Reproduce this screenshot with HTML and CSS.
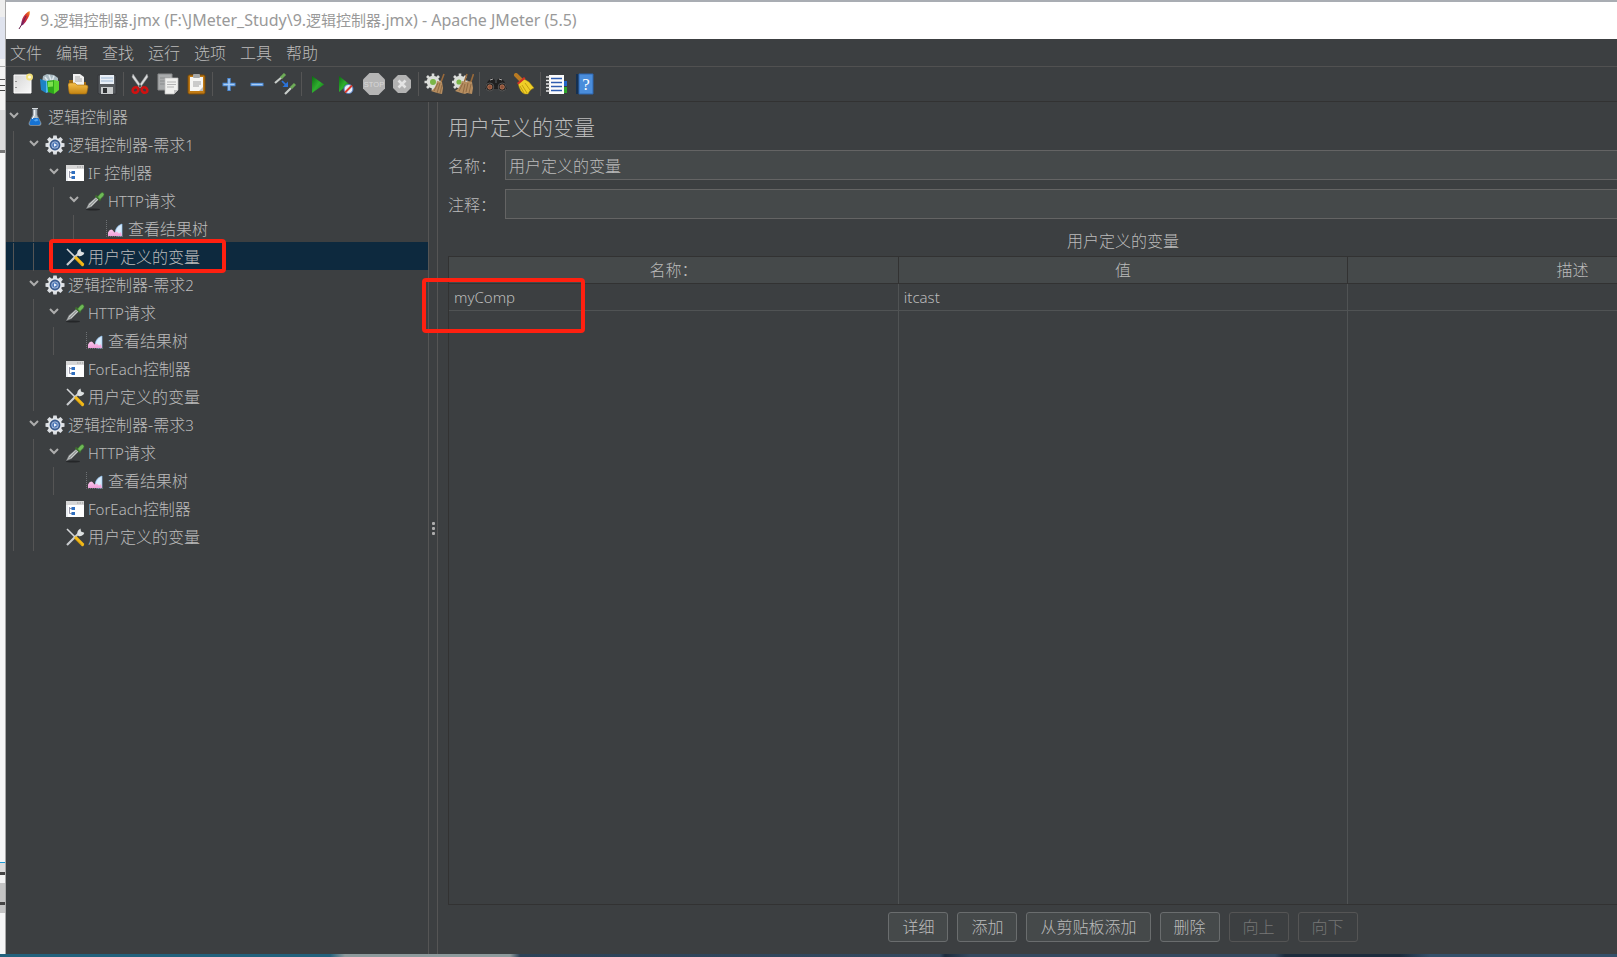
FILE: index.html
```html
<!DOCTYPE html>
<html lang="zh-CN">
<head>
<meta charset="utf-8">
<title>9.逻辑控制器.jmx - Apache JMeter (5.5)</title>
<link rel="stylesheet" href="styles.css">
</head>
<body>
<svg class="defs" aria-hidden="true">
  <defs>
    <linearGradient id="feather" x1="1" y1="0" x2="0" y2="1"><stop offset="0" stop-color="#f29a1f"/><stop offset=".35" stop-color="#d9342b"/><stop offset=".7" stop-color="#b3224f"/><stop offset="1" stop-color="#5b2a86"/></linearGradient>
    <linearGradient id="gold" x1="0" y1="0" x2="0" y2="1"><stop offset="0" stop-color="#f6c04a"/><stop offset="1" stop-color="#c48412"/></linearGradient>
    <linearGradient id="green" x1="0" y1="0" x2="1" y2="1"><stop offset="0" stop-color="#0c6b12"/><stop offset=".5" stop-color="#2fae2f"/><stop offset="1" stop-color="#0a7a10"/></linearGradient>
    <linearGradient id="paper" x1="0" y1="0" x2="1" y2="1"><stop offset="0" stop-color="#d6d6d6"/><stop offset="1" stop-color="#f8f8f8"/></linearGradient>
    <linearGradient id="pink" x1="0" y1="0" x2="0" y2="1"><stop offset="0" stop-color="#f9c6ea"/><stop offset="1" stop-color="#f0a0da"/></linearGradient>
    <symbol id="chev" viewBox="0 0 10 8"><path d="M1 2l4 4 4-4" fill="none" stroke="#adadad" stroke-width="2"/></symbol>
    <symbol id="flask" viewBox="0 0 20 20"><path d="M8 2v6L4 16q-.5 2.500 2 2.500h8q2.500 0 2-2.500L12 8V2z" fill="#b5bfc6" stroke="#7d878e" stroke-width=".8"/><path d="M7 1.500h6" stroke="#d5dade"/><path d="M6.500 11h7l2 5q.3 2-2 2h-7q-2.500 0-2-2z" fill="#1672d2"/><path d="M7 12l2 1 3-1.500 1.500 2-3 1z" fill="#4fa5f5"/><path d="M9.300 3v5.500l-2 3.500" stroke="#fff" fill="none"/></symbol>
    <symbol id="gear" viewBox="0 0 20 20"><g fill="#dcdfe3"><path d="M8.300.5h3.400l.8 5h-5zM8.300 19.500h3.400l.8-5h-5z"/><path d="M8.300.5h3.400l.8 5h-5zM8.300 19.500h3.400l.8-5h-5z" transform="rotate(45 10 10)"/><path d="M8.300.5h3.400l.8 5h-5zM8.300 19.500h3.400l.8-5h-5z" transform="rotate(90 10 10)"/><path d="M8.300.5h3.400l.8 5h-5zM8.300 19.500h3.400l.8-5h-5z" transform="rotate(135 10 10)"/></g><circle cx="10" cy="10" r="7" fill="#e4e7ea"/><circle cx="10" cy="10" r="4.500" fill="#b9cbe6" stroke="#3a5c8f" stroke-width="1.800"/><circle cx="10" cy="10" r="2.800" fill="#4d78b8"/><path d="M9 8.200l3 1.800-3 1.800z" fill="#f2f6fb"/></symbol>
    <symbol id="ctrl" viewBox="0 0 20 20"><path d="M1 2h18v16H1z" fill="#fff"/><path d="M1 2h18v4H1z" fill="#d6d6d6"/><path d="M12 4h1.500M14.500 4H16M17 4h1.200" stroke="#999"/><path d="M1 6h2v12H1z" fill="#e9edf2"/><path d="M4.500 8v6.500H7M4.500 9.500H7" stroke="#99a" fill="none"/><path d="M6.500 8h3.500v3H6.500zM6.500 13h3.500v3H6.500z" fill="#2f6fc0"/></symbol>
    <symbol id="dropper" viewBox="0 0 20 20"><ellipse cx="8" cy="18.500" rx="7" ry="1" fill="#242628"/><path d="M1.500 17.500l2.500-5 7.500-6.500 2.500 2L6.500 15.500z" fill="#c9cdcc" stroke="#7f8384" stroke-width=".6"/><path d="M4 15.500l8-8" stroke="#6d7070" stroke-width="1"/><path d="M10.500 4.500l5 5" stroke="#3d6b2c" stroke-width="2"/><path d="M12.500 6l3-3.500q1.800-1.800 3-.5t0 3L15 8.500z" fill="#6fba57" stroke="#37742b" stroke-width=".6"/></symbol>
    <symbol id="chart" viewBox="0 0 20 20"><path d="M1.500 1v16.500H18" stroke="#6d7174" stroke-width="1" stroke-dasharray="1 1" fill="none"/><path d="M17 5v12h-5q-3-3-1-7 2-4 6-5z" fill="#d8ebfc" stroke="#8fc0ee" stroke-width=".7"/><path d="M3 17v-3.500q2-4 4.500-2.500l2 2.500 2.500-1 2 2 2-1.500 1 4z" fill="url(#pink)"/></symbol>
    <symbol id="tools" viewBox="0 0 20 20"><path d="M2 18L14 6" stroke="#c9cccf" stroke-width="2.200"/><path d="M12.500 7.500q-1-4 3-6l.5 3 2.500 1q1.500-.5 0 2-2.500 2.500-5 1.500z" fill="#dcdfe1"/><path d="M2 2l9 9" stroke="#d4d6d8" stroke-width="1.600"/><path d="M11 11l6.500 6.500" stroke="#f2b919" stroke-width="3.200" stroke-linecap="round"/><path d="M10 12l6.500 6" stroke="#a87a08" stroke-width=".8"/></symbol>

    <symbol id="t-new" viewBox="0 0 22 22"><path d="M2 2h17v18H2z" fill="url(#paper)" stroke="#fff"/><path d="M4 8v1M4 14v1" stroke="#777" stroke-width="1.500"/><circle cx="17.500" cy="4" r="3.500" fill="#f4e27c"/><circle cx="17.500" cy="4" r="1.500" fill="#fffce0"/></symbol>
    <symbol id="t-tpl" viewBox="0 0 22 22"><path d="M3 3l4-2 7 1 4 3v5H2z" fill="#a9bac2"/><path d="M5 4l3 4M9 2l2 5M14 3l-2 5" stroke="#dfe8ec" stroke-width="1.500"/><path d="M0 6l6 2v12l-5-3z" fill="#1d83c5"/><path d="M6 8l3-1v12l-3 1z" fill="#54bbec"/><path d="M7 8l7-1v14l-6-2z" fill="#2da71b"/><path d="M14 7l5 1v9l-5 4z" fill="#5cd62f"/><path d="M8 9l5-.5v5L8 14z" fill="#7ee04f"/></symbol>
    <symbol id="t-open" viewBox="0 0 22 22"><path d="M1 7h6l2 2h9v4H1z" fill="#a06a12"/><path d="M5 1h7l4 3v9H5z" fill="#f1f1f1"/><path d="M7 4h5M7 6h7M7 8h7" stroke="#aaa"/><path d="M0 12q0-2 2-2h5l2 2h9q2 0 2 2l-1 5q0 2-2 2H3q-2 0-2-2z" fill="url(#gold)" stroke="#a36c0d" stroke-width=".6"/></symbol>
    <symbol id="t-save" viewBox="0 0 22 22"><path d="M2 2h17l1 1v18H3l-1-1z" fill="#565a5e" stroke="#34373a"/><path d="M4 2h14v9H4z" fill="#e8eef5"/><path d="M5 5h12M5 8h12" stroke="#9db8d5"/><path d="M5 14h12v7H5z" fill="#c9cccd"/><path d="M7 15h4v5H7z" fill="#2f3234"/></symbol>
    <symbol id="t-cut" viewBox="0 0 22 22"><path d="M4 1l9 13-2 1L3 4zM18 1L9 14l2 1 8-11z" fill="#d9dadb" stroke="#8e9192" stroke-width=".5"/><g fill="none" stroke="#cf1111" stroke-width="2.600"><ellipse cx="6.500" cy="17" rx="3" ry="2.600" transform="rotate(-35 6.500 17)"/><ellipse cx="15.500" cy="17" rx="3" ry="2.600" transform="rotate(35 15.500 17)"/></g></symbol>
    <symbol id="t-copy" viewBox="0 0 22 22"><path d="M1 1h14v16H1z" fill="#a9abac" stroke="#8a8c8d"/><path d="M3 5h10M3 8h10M3 11h8" stroke="#8b8d8e"/><path d="M8 5h13v12l-4 4H8z" fill="#f0f0ee" stroke="#bbb" stroke-width=".7"/><path d="M10 9h9M10 11.500h9M10 14h7" stroke="#b4b4b4"/><path d="M21 17h-4v4z" fill="#c4c4c4"/></symbol>
    <symbol id="t-paste" viewBox="0 0 22 22"><rect x="3" y="2" width="17" height="19" rx="1.500" fill="#c07a14" stroke="#7a4b08"/><path d="M5 4h13v14H5z" fill="#f6f6f4"/><rect x="8" y="1" width="7" height="4" rx="1" fill="#a4a7a8"/><path d="M8 9h8M8 11h8M8 13h6" stroke="#a0a0a0"/><path d="M18 14v4h-4z" fill="#bdbdbd"/></symbol>
    <symbol id="t-plus" viewBox="0 0 22 22"><path d="M11 5v13M4.500 11.500h13" stroke="#4b8ad6" stroke-width="3.400"/><path d="M11 6v11M5.500 11.500h11" stroke="#a9cdf5" stroke-width="1.400"/></symbol>
    <symbol id="t-minus" viewBox="0 0 22 22"><path d="M4.500 11.500h13" stroke="#4b8ad6" stroke-width="3.400"/><path d="M5.500 11.500h11" stroke="#a9cdf5" stroke-width="1.400"/></symbol>
    <symbol id="t-toggle" viewBox="0 0 22 22"><path d="M1 10l7-6M11 21l6-6" stroke="#c8cdca" stroke-width="2.200"/><path d="M7 5l4-4M17 15l4-4" stroke="#6dab57" stroke-width="3"/><path d="M8 8l5 5" stroke="#2a73db" stroke-width="1.700"/><path d="M14 8.500v5.500H8.500z" fill="#2a73db"/></symbol>
    <symbol id="t-run" viewBox="0 0 22 22"><path d="M5 3l12 8.500L5 20z" fill="url(#green)"/></symbol>
    <symbol id="t-run2" viewBox="0 0 22 22"><path d="M4 3l10 8-10 8z" fill="url(#green)"/><circle cx="13.500" cy="16" r="4.500" fill="#e8eefa" stroke="#4a79c4"/><path d="M10 19.500l7-7" stroke="#d8392d" stroke-width="2"/></symbol>
    <symbol id="t-stop" viewBox="0 0 22 22"><path d="M6.500 0h9L22 6.500v9L15.500 22h-9L0 15.500v-9z" fill="#b5b5b5"/><text x="11" y="14" font-family="Liberation Sans" font-size="7.500" fill="#d8d8d8" text-anchor="middle">STOP</text></symbol>
    <symbol id="t-shut" viewBox="0 0 22 22"><path d="M7 2h8l5 5v8l-5 5H7l-5-5V7z" fill="#b3b3b3"/><path d="M7.500 7.500l7 7M14.500 7.500l-7 7" stroke="#e4e4e4" stroke-width="2.600"/></symbol>
    <symbol id="t-clear" viewBox="0 0 22 22"><g stroke="#dadcda" stroke-width="2.600"><path d="M9 .5v17M.5 9h17M3 3l12 12M15 3L3 15"/></g><circle cx="9" cy="9" r="6.300" fill="#dcdfda"/><circle cx="9" cy="9" r="3" fill="#7ab648"/><path d="M20 1l-3 8" stroke="#9a6a3a" stroke-width="1.600"/><path d="M13 8l5 1 1 6-1 6-5-1-6-2q5-3 6-10z" fill="#b58d60"/><path d="M14 10l-4 8M16 10l-3 10M18 12l-2 8" stroke="#86623b" stroke-width=".8"/></symbol>
    <symbol id="t-clearall" viewBox="0 0 22 22"><g stroke="#dadcda" stroke-width="2.600"><path d="M8 .5v17M0 9h16M2 3l12 12M14 3L2 15"/></g><circle cx="8" cy="9" r="6.300" fill="#dcdfda"/><circle cx="7" cy="9" r="2.600" fill="#7ab648"/><path d="M15 1l-3 9M21.500 1l-3 9" stroke="#9a6a3a" stroke-width="1.600"/><path d="M10 8l4 1 2-1 4 1 1 6-1 6-5-1-2 1-4-1-6-2q5-3 7-10z" fill="#b58d60"/><path d="M11 10l-4 8M13 11l-2 9M16 10l-2 9M19 11l-2 9" stroke="#86623b" stroke-width=".8"/></symbol>
    <symbol id="t-find" viewBox="0 0 22 22"><path d="M3 8l4-3 3 2v3h2V7l3-2 4 3 3 6v2H0v-2z" fill="#202020"/><path d="M5 7l3-1M14 6l3 1" stroke="#aaa"/><circle cx="4.800" cy="14" r="4" fill="#1c1c1c" stroke="#555"/><circle cx="17.200" cy="14" r="4" fill="#1c1c1c" stroke="#555"/><circle cx="4.800" cy="14" r="2.200" fill="#8b5139" stroke="#c98461" stroke-width=".7"/><circle cx="17.200" cy="14" r="2.200" fill="#8b5139" stroke="#c98461" stroke-width=".7"/></symbol>
    <symbol id="t-broom" viewBox="0 0 22 22"><path d="M3 2l5 5" stroke="#b87a22" stroke-width="4" stroke-linecap="round"/><path d="M5 10l6-4 5 3 5 6q-4 1-6 6h-3q-5-1-7-11z" fill="#f0cf27" stroke="#ab8a0d" stroke-width=".5"/><path d="M9 12l5 8M12 10l5 7M7 13l4 7" stroke="#b8920c" stroke-width=".8"/><path d="M4 10l7-6 1.500 1.500-7 6z" fill="#d13225"/></symbol>
    <symbol id="t-list" viewBox="0 0 22 22"><path d="M17 8h4v5h-4z" fill="#2466c9"/><path d="M17 14h4v6h-4z" fill="#2fa52c"/><path d="M3 2h15v19H3z" fill="#fcfcfc"/><path d="M5 5.500h11M5 9.500h11M5 13.500h11M5 17.500h11" stroke="#2e5cb0" stroke-width="1.300"/><path d="M0 4h4M0 7.500h4M0 11h4M0 14.500h4M0 18h4" stroke="#e4e4e4" stroke-width="1.400"/></symbol>
    <symbol id="t-help" viewBox="0 0 22 22"><path d="M2 1h17v20H2z" fill="#4a8ddb"/><path d="M2 1h3v20H2z" fill="#16304f"/><path d="M5 1h14v20H5z" fill="none" stroke="#2d66b0"/><text x="12" y="17" font-family="Liberation Serif" font-size="17" fill="#fff" text-anchor="middle">?</text></symbol>
  </defs>
</svg>

<div class="desktop">
  <div class="behind" aria-hidden="true"></div>
  <div class="window">
    <header class="titlebar">
      <svg class="feather" viewBox="0 0 16 22"><path d="M12.500 2q1 3-1.500 7-2 4-5 7l-2 .5q0-3 1.500-7Q8 4 12.500 2z" fill="url(#feather)"/><path d="M9 7l-4 8-3 5" stroke="#6a2350" stroke-width="1" fill="none"/></svg>
      <span>9.<small>逻辑控制器</small>.jmx (F:\JMeter_Study\9.<small>逻辑控制器</small>.jmx) - Apache JMeter (5.5)</span>
    </header>
    <nav class="menubar">
      <button>文件</button><button>编辑</button><button>查找</button><button>运行</button><button>选项</button><button>工具</button><button>帮助</button>
    </nav>
    <div class="toolbar" role="toolbar">
      <button aria-label="新建"><svg><use href="#t-new"/></svg></button>
      <button aria-label="模板"><svg><use href="#t-tpl"/></svg></button>
      <button aria-label="打开"><svg><use href="#t-open"/></svg></button>
      <button aria-label="保存"><svg><use href="#t-save"/></svg></button>
      <i></i>
      <button aria-label="剪切"><svg><use href="#t-cut"/></svg></button>
      <button aria-label="复制"><svg><use href="#t-copy"/></svg></button>
      <button aria-label="粘贴"><svg><use href="#t-paste"/></svg></button>
      <i></i>
      <button aria-label="展开"><svg><use href="#t-plus"/></svg></button>
      <button aria-label="折叠"><svg><use href="#t-minus"/></svg></button>
      <button aria-label="切换"><svg><use href="#t-toggle"/></svg></button>
      <i></i>
      <button aria-label="启动"><svg><use href="#t-run"/></svg></button>
      <button aria-label="不停顿开始"><svg><use href="#t-run2"/></svg></button>
      <button aria-label="停止" disabled><svg><use href="#t-stop"/></svg></button>
      <button aria-label="关闭" disabled><svg><use href="#t-shut"/></svg></button>
      <i></i>
      <button aria-label="清除"><svg><use href="#t-clear"/></svg></button>
      <button aria-label="清除全部"><svg><use href="#t-clearall"/></svg></button>
      <i></i>
      <button aria-label="搜索"><svg><use href="#t-find"/></svg></button>
      <button aria-label="重置搜索"><svg><use href="#t-broom"/></svg></button>
      <i></i>
      <button aria-label="函数助手"><svg><use href="#t-list"/></svg></button>
      <button aria-label="帮助"><svg><use href="#t-help"/></svg></button>
    </div>
    <div class="split">
      <ul class="tree">
        <li><svg class="chev"><use href="#chev"/></svg><svg class="ico"><use href="#flask"/></svg>逻辑控制器</li>
        <li><b></b><svg class="chev"><use href="#chev"/></svg><svg class="ico"><use href="#gear"/></svg>逻辑控制器-需求<span>1</span></li>
        <li><b></b><b></b><svg class="chev"><use href="#chev"/></svg><svg class="ico"><use href="#ctrl"/></svg><span>IF&nbsp;</span>控制器</li>
        <li><b></b><b></b><b></b><svg class="chev"><use href="#chev"/></svg><svg class="ico"><use href="#dropper"/></svg><span>HTTP</span>请求</li>
        <li><b></b><b></b><b></b><b></b><em></em><svg class="ico"><use href="#chart"/></svg>查看结果树</li>
        <li class="selected"><b></b><b></b><em></em><svg class="ico"><use href="#tools"/></svg>用户定义的变量<div class="mark mark-node"></div></li>
        <li><b></b><svg class="chev"><use href="#chev"/></svg><svg class="ico"><use href="#gear"/></svg>逻辑控制器-需求<span>2</span></li>
        <li><b></b><b></b><svg class="chev"><use href="#chev"/></svg><svg class="ico"><use href="#dropper"/></svg><span>HTTP</span>请求</li>
        <li><b></b><b></b><b></b><em></em><svg class="ico"><use href="#chart"/></svg>查看结果树</li>
        <li><b></b><b></b><em></em><svg class="ico"><use href="#ctrl"/></svg><span>ForEach</span>控制器</li>
        <li><b></b><b></b><em></em><svg class="ico"><use href="#tools"/></svg>用户定义的变量</li>
        <li><b></b><svg class="chev"><use href="#chev"/></svg><svg class="ico"><use href="#gear"/></svg>逻辑控制器-需求<span>3</span></li>
        <li><b></b><b></b><svg class="chev"><use href="#chev"/></svg><svg class="ico"><use href="#dropper"/></svg><span>HTTP</span>请求</li>
        <li><b></b><b></b><b></b><em></em><svg class="ico"><use href="#chart"/></svg>查看结果树</li>
        <li><b></b><b></b><em></em><svg class="ico"><use href="#ctrl"/></svg><span>ForEach</span>控制器</li>
        <li><b></b><b></b><em></em><svg class="ico"><use href="#tools"/></svg>用户定义的变量</li>
      </ul>
      <div class="divider"><i></i><i></i><i></i></div>
      <main class="panel">
        <h1>用户定义的变量</h1>
        <div class="field"><label for="name">名称：</label><input id="name" type="text" value="用户定义的变量"></div>
        <div class="field"><label for="comment">注释：</label><input id="comment" type="text"></div>
        <h2>用户定义的变量</h2>
        <div class="grid">
          <table>
            <thead><tr><th>名称：</th><th>值</th><th>描述</th></tr></thead>
            <tbody>
              <tr class="row"><td>myComp</td><td>itcast</td><td></td></tr>
              <tr class="rest"><td></td><td></td><td></td></tr>
            </tbody>
          </table>
          <div class="mark mark-cell"></div>
        </div>
        <div class="actions">
          <button>详细</button><button>添加</button><button>从剪贴板添加</button><button>删除</button><button disabled>向上</button><button disabled>向下</button>
        </div>
      </main>
    </div>
  </div>
</div>
</body>
</html>
```
FILE: styles.css
```css
* { box-sizing: border-box; }

body {
  margin: 0;
  height: 100vh;
  overflow: hidden;
  font: 16px/28px "Noto Sans", "Noto Sans CJK SC", sans-serif;
  font-weight: 300;
  color: #bbb;
}

button { font: inherit; color: inherit; background: none; border: 0; padding: 0; }

.defs { position: absolute; width: 0; height: 0; }

.desktop {
  display: flex;
  height: 100vh;
  padding-bottom: 3px;
  overflow: hidden;
  background: linear-gradient(90deg, #22617c 0, #22617c 330px, #8d9a9c 345px, #8d9a9c 510px, #2c4257 520px, #34495f 940px, #1d2c3d 945px, #34495f 970px, #34495f 1275px, #1d2c3d 1285px, #1d2c3d 1400px, #34506a 1430px);
}

/* Sliver of the windows lying underneath */
.behind {
  flex: none;
  width: 6px;
  background: linear-gradient(#eee 17px, #dfe3ee 17px 59px, #f4f4f4 59px 66px, #aaa 66px 67px, #f4f4f4 67px 79px, #555 79px 80px, #f4f4f4 80px 85px, #444 85px 86px, #f4f4f4 86px 90px, #444 90px 91px, #f4f4f4 91px 110px, #dcdcdc 110px 150px, #777 150px 153px, #f6f6f6 153px 862px, #1a9bd7 862px 863px, #dcdcdc 863px 872px, #444 872px 875px, #f4f4f4 875px 883px, #c4c4c4 883px 902px, #444 902px 905px, #c4c4c4 905px 913px, #f6f6f6 913px);
  border-right: 1px solid #a8a8a8;
}

/* The window runs past the right edge of the screen */
.window {
  flex: none;
  width: calc(100vw + 181px);
  display: flex;
  flex-direction: column;
  background: #3c3f41;
  border-top: 2px solid #a9adb3;
}

.titlebar {
  display: flex;
  align-items: center;
  gap: 7px;
  height: 37px;
  padding: 0 0 2px 11px;
  background: #fff;
  color: #999;
  font-weight: 400;
}
.titlebar small { font-size: 15px; }
.feather { width: 16px; height: 22px; }

.menubar {
  display: flex;
  gap: 14px;
  height: 28px;
  padding-left: 4px;
  border-bottom: 1px solid #515151;
}

.toolbar {
  display: flex;
  height: 35px;
  padding: 3px;
  border-bottom: 1px solid #323232;
}
.toolbar button { width: 28px; height: 28px; padding: 3px; }
.toolbar svg { display: block; width: 22px; height: 22px; }
.toolbar i { width: 1px; margin: 2px; background: #555; }

.split { flex: 1; display: flex; min-height: 0; }

.tree { width: 422px; margin: 0; padding: 0; list-style: none; }
.tree li { display: flex; align-items: center; height: 28px; padding-top: 2px; position: relative; white-space: nowrap; }
.tree span { font-size: 15px; }
.tree b { width: 20px; height: 28px; background: linear-gradient(#555, #555) 7px 0 / 1px 100% no-repeat; }
.tree em { width: 19px; }
.chev { width: 10px; height: 8px; margin: 0 6px 4px 3px; }
.ico { width: 20px; height: 20px; margin-right: 3px; }
.tree .selected { background: #0d293e; }

.divider {
  width: 10px;
  display: flex;
  flex-direction: column;
  align-items: center;
  justify-content: center;
  gap: 2px;
  border: solid #555;
  border-width: 0 1px;
}
.divider i { width: 3px; height: 3px; border-radius: 1px; background: #adadad; }

.panel { flex: 1; display: flex; flex-direction: column; padding: 11px 6px 12px 10px; }
h1 { margin: 0 0 9px; font-size: 21px; font-weight: 300; line-height: 28px; }
h2 { margin: 1px 0 3px; font-size: 16px; font-weight: 300; line-height: 24px; text-align: center; }

.field { display: flex; align-items: center; margin-bottom: 9px; }
.field label { width: 57px; padding-top: 2px; }
.field input {
  flex: 1;
  height: 30px;
  padding: 0 3px;
  font: inherit;
  color: inherit;
  background: #45494a;
  border: 1px solid #646464;
}

.grid { flex: 1; min-height: 0; position: relative; border: 1px solid #323232; }
table { width: 100%; height: 100%; table-layout: fixed; border-collapse: collapse; }
th { height: 26px; padding: 2px 0 0; line-height: 23px; font-weight: 300; background: #45494a; border-bottom: 1px solid #323232; }
th + th { border-left: 1px solid #323232; }
td { padding: 0 5px; font-size: 15px; }
td + td { border-left: 1px solid #505354; }
.row td { height: 27px; line-height: 26px; border-bottom: 1px solid #505354; }
.rest td { height: auto; }
thead, .row { height: 1px; }

.actions { display: flex; justify-content: center; gap: 9px; margin-top: 7px; }
.actions button {
  height: 30px;
  padding: 0 13px;
  background: #45494a;
  border: 1px solid #6a6d6e;
  border-radius: 3px;
}
.actions button:disabled { color: #777; background: none; border-color: #555; }

/* Red highlight frames */
.mark { position: absolute; border: 4px solid #ff2010; border-radius: 4px; }
.mark-node { left: 43px; top: -3px; width: 177px; height: 34px; z-index: 1; }
.mark-cell { left: -27px; top: 21px; width: 163px; height: 55px; }
```
